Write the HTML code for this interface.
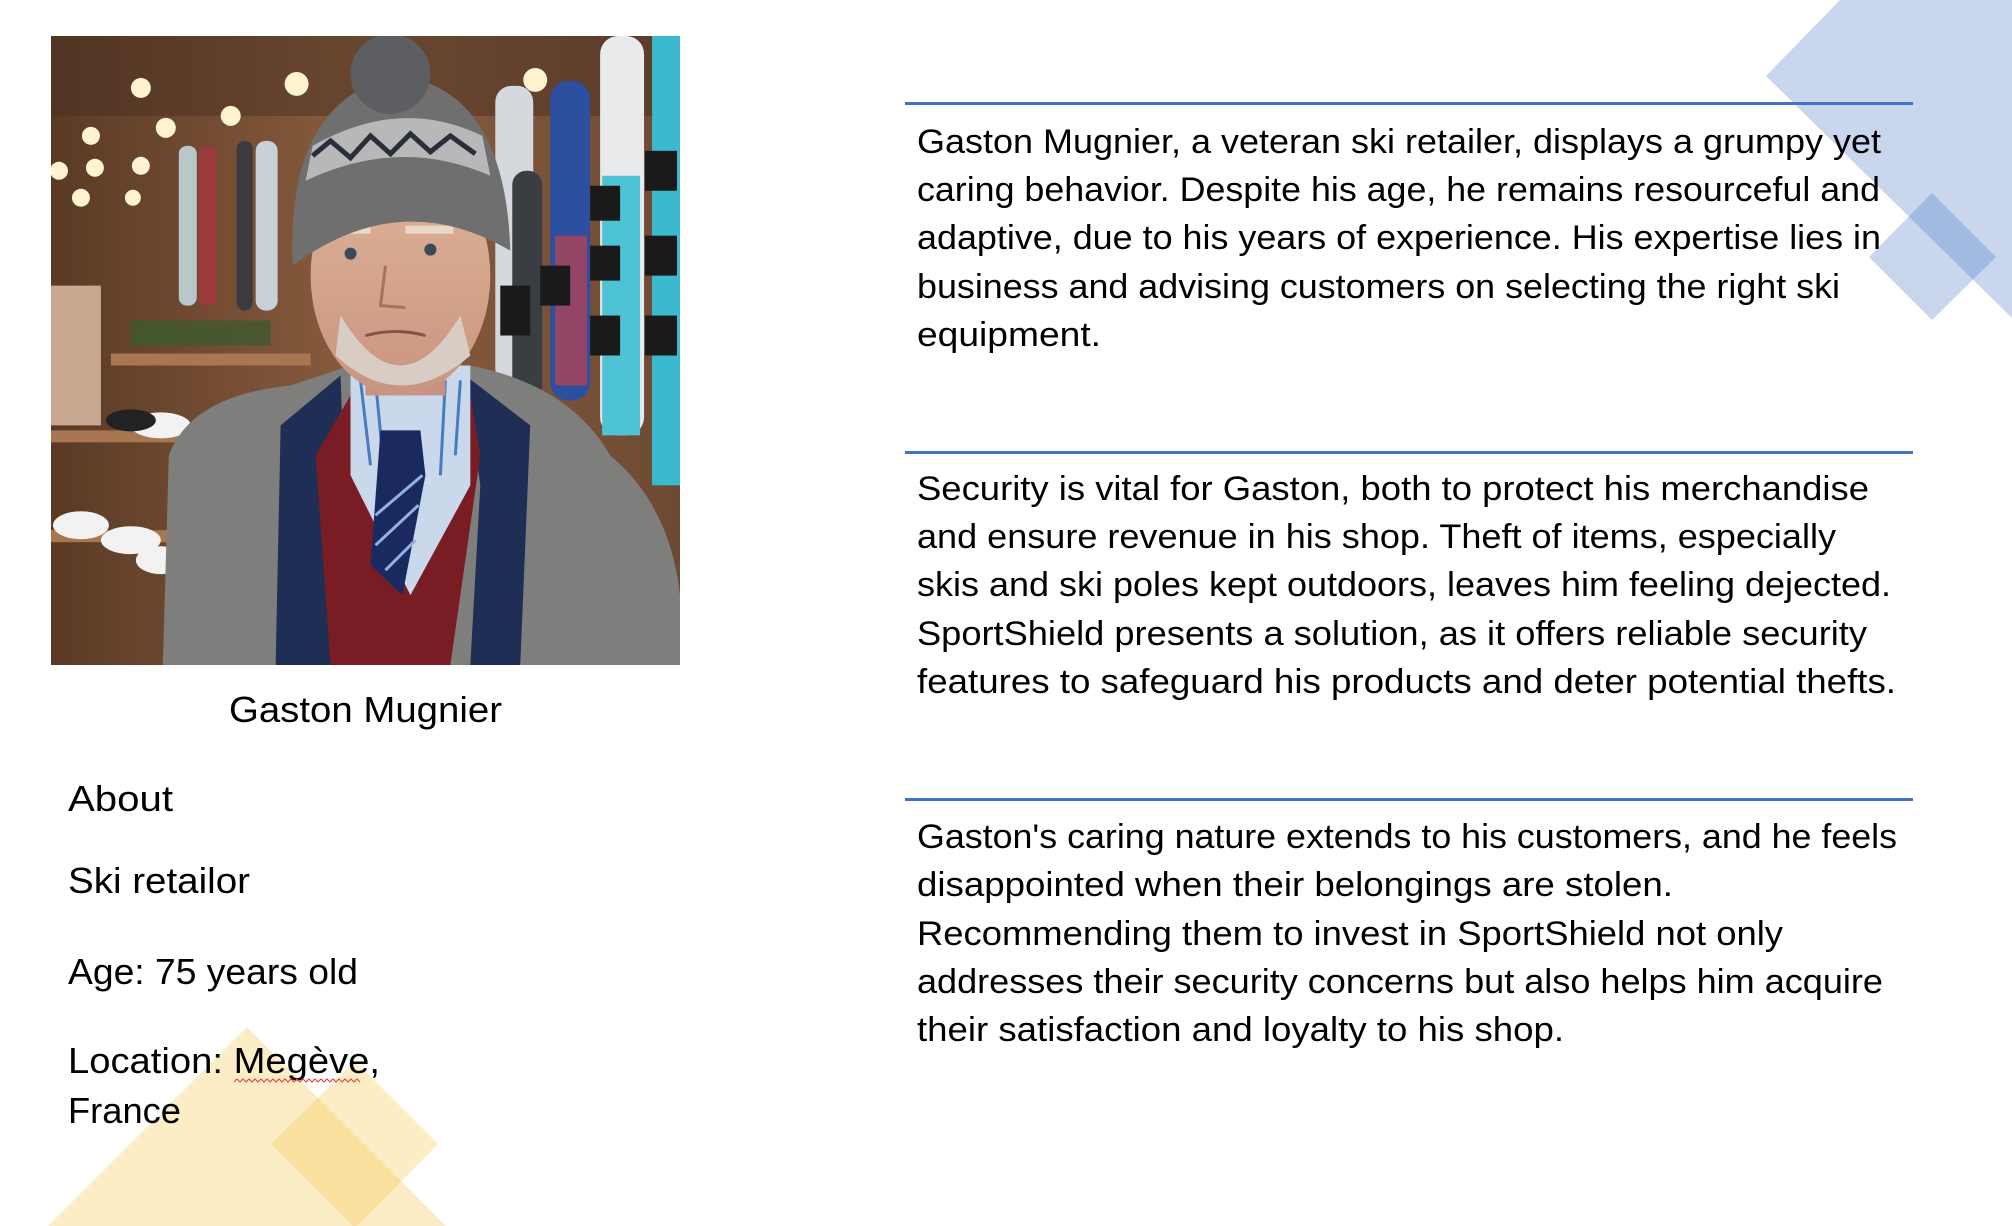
<!DOCTYPE html>
<html><head><meta charset="utf-8"><style>
html,body{margin:0;padding:0;background:#fff;}
body{width:2012px;height:1226px;position:relative;overflow:hidden;font-family:"Liberation Sans",sans-serif;}
svg{position:absolute;left:0;top:0;}
</style></head><body>
<svg width="2012" height="1226" viewBox="0 0 2012 1226">
<!-- decorative shapes -->
<polygon points="1840,0 2012,0 2012,318 1766,76" fill="#4472c4" fill-opacity="0.29"/>
<polygon points="1932,193 1996,257 1932,320 1869,257" fill="#4472c4" fill-opacity="0.29"/>
<polygon points="247,1027 450,1230 44,1230" fill="#f5c342" fill-opacity="0.3"/>
<polygon points="355,1061 438,1144 355,1228 271,1144" fill="#f5c342" fill-opacity="0.3"/>

<!-- photo -->
<g transform="translate(51,36)">
<svg width="629" height="629" viewBox="0 0 630 630">
<defs>
<linearGradient id="wood" x1="0" y1="0" x2="1" y2="0"><stop offset="0" stop-color="#5a3a25"/><stop offset="0.5" stop-color="#8a5d3e"/><stop offset="1" stop-color="#6d4a33"/></linearGradient>
<linearGradient id="face" x1="0" y1="0" x2="0" y2="1"><stop offset="0" stop-color="#e0b49a"/><stop offset="1" stop-color="#c99580"/></linearGradient>
</defs>
<rect width="630" height="630" fill="url(#wood)"/>
<rect x="0" y="0" width="630" height="80" fill="#4a3022" opacity="0.5"/>
<!-- lights -->
<g fill="#fff3d0"><circle cx="90" cy="52" r="10"/><circle cx="40" cy="100" r="9"/><circle cx="115" cy="92" r="10"/><circle cx="8" cy="135" r="9"/><circle cx="44" cy="132" r="9"/><circle cx="90" cy="130" r="9"/><circle cx="30" cy="162" r="9"/><circle cx="82" cy="162" r="8"/><circle cx="180" cy="80" r="10"/><circle cx="246" cy="48" r="12"/><circle cx="485" cy="44" r="12"/></g>
<!-- skis left -->
<rect x="128" y="110" width="18" height="160" fill="#b9c7cc" rx="8"/>
<rect x="148" y="110" width="18" height="160" fill="#9a3a3a" rx="8"/>
<rect x="186" y="105" width="16" height="170" fill="#3a3a40" rx="8"/>
<rect x="205" y="105" width="22" height="170" fill="#c8d0d8" rx="10"/>
<!-- shelves and shoes -->
<rect x="60" y="318" width="200" height="12" fill="#a87650"/>
<rect x="0" y="395" width="160" height="12" fill="#a87650"/>
<rect x="0" y="495" width="140" height="12" fill="#a87650"/>
<g fill="#f2f2f2"><ellipse cx="110" cy="390" rx="30" ry="13"/><ellipse cx="160" cy="405" rx="28" ry="13"/><ellipse cx="30" cy="490" rx="28" ry="14"/><ellipse cx="80" cy="505" rx="30" ry="14"/><ellipse cx="110" cy="525" rx="25" ry="14"/></g>
<ellipse cx="80" cy="385" rx="25" ry="11" fill="#222"/>
<rect x="80" y="285" width="140" height="25" fill="#3d5a30" opacity="0.8"/>
<rect x="0" y="250" width="50" height="140" fill="#c8a890"/>
<!-- skis right -->
<rect x="445" y="50" width="38" height="300" rx="16" fill="#d5d8dc"/>
<rect x="462" y="135" width="30" height="230" rx="14" fill="#3a3d42"/>
<rect x="500" y="45" width="40" height="320" rx="18" fill="#2c4fa0"/>
<rect x="505" y="200" width="32" height="150" fill="#c0404a" opacity="0.7"/>
<rect x="550" y="0" width="44" height="400" rx="18" fill="#e8eaec"/>
<rect x="552" y="140" width="38" height="260" fill="#4ec3d6"/>
<rect x="602" y="0" width="30" height="450" fill="#3ab9cf"/>
<g fill="#1a1a1a"><rect x="540" y="150" width="30" height="35"/><rect x="540" y="210" width="30" height="35"/><rect x="540" y="280" width="30" height="40"/><rect x="595" y="115" width="32" height="40"/><rect x="595" y="200" width="32" height="40"/><rect x="595" y="280" width="32" height="40"/><rect x="450" y="250" width="30" height="50"/><rect x="490" y="230" width="30" height="40"/></g>
<!-- body -->
<path d="M112,630 L118,420 Q140,360 240,350 L300,330 L420,330 Q520,350 560,420 Q620,470 630,560 L630,630 Z" fill="#7e7e7c"/>
<path d="M225,630 L230,390 L290,340 L300,630 Z" fill="#1f2e55"/>
<path d="M420,630 L430,450 L415,340 L480,390 L470,630 Z" fill="#1f2e55"/>
<path d="M265,420 L300,360 L420,360 L430,420 L400,630 L280,630 Z" fill="#7a1c24"/>
<path d="M300,330 L420,330 L420,450 L360,560 L300,440 Z" fill="#c9d8ea"/>
<g stroke="#4a7ac0" stroke-width="3"><line x1="310" y1="345" x2="320" y2="430"/><line x1="325" y1="345" x2="335" y2="450"/><line x1="395" y1="345" x2="390" y2="440"/><line x1="410" y1="345" x2="405" y2="420"/></g>
<path d="M330,395 L370,395 L375,440 L352,560 L320,530 Z" fill="#1a2a60"/>
<g stroke="#8fb3e0" stroke-width="3"><line x1="325" y1="480" x2="372" y2="440"/><line x1="325" y1="510" x2="368" y2="470"/><line x1="335" y1="535" x2="365" y2="505"/></g>
<!-- neck and face -->
<rect x="315" y="300" width="80" height="60" fill="#c89280"/>
<ellipse cx="350" cy="240" rx="90" ry="120" fill="url(#face)"/>
<path d="M290,280 Q350,380 410,280 L420,320 Q350,380 285,320 Z" fill="#d8cdc4"/>
<rect x="275" y="190" width="45" height="8" fill="#e8d8c8"/>
<rect x="355" y="190" width="48" height="8" fill="#e8d8c8"/>
<circle cx="300" cy="218" r="6" fill="#3a4a5a"/><circle cx="380" cy="214" r="6" fill="#3a4a5a"/>
<path d="M335,230 L330,270 L355,272" fill="none" stroke="#a8705e" stroke-width="3"/>
<path d="M315,300 Q345,292 375,300" fill="none" stroke="#8a5048" stroke-width="3"/>
<!-- hat -->
<path d="M242,230 Q235,60 350,40 Q455,55 460,215 Q350,150 242,230 Z" fill="#6f6f70"/>
<path d="M262,110 Q350,60 432,100 L440,140 Q350,100 255,145 Z" fill="#b8b8b8"/>
<path d="M262,120 L280,105 L300,122 L320,100 L340,118 L360,98 L380,116 L400,100 L425,118" fill="none" stroke="#2a2d3a" stroke-width="5"/>
<circle cx="340" cy="38" r="40" fill="#5c5e62"/>
</svg>
</g>

<!-- lines -->
<g fill="#4472c4"><rect x="905" y="102" width="1008" height="3"/><rect x="905" y="451" width="1008" height="3"/><rect x="905" y="798" width="1008" height="3"/></g>

<!-- paragraph text -->
<g font-family="Liberation Sans, sans-serif" font-size="34" fill="#000" lengthAdjust="spacingAndGlyphs">
<text x="917" y="153" textLength="964" lengthAdjust="spacingAndGlyphs">Gaston Mugnier, a veteran ski retailer, displays a grumpy yet</text>
<text x="917" y="201" textLength="963" lengthAdjust="spacingAndGlyphs">caring behavior. Despite his age, he remains resourceful and</text>
<text x="917" y="249" textLength="964" lengthAdjust="spacingAndGlyphs">adaptive, due to his years of experience. His expertise lies in</text>
<text x="917" y="298" textLength="923" lengthAdjust="spacingAndGlyphs">business and advising customers on selecting the right ski</text>
<text x="917" y="346" textLength="184" lengthAdjust="spacingAndGlyphs">equipment.</text>

<text x="917" y="500" textLength="952" lengthAdjust="spacingAndGlyphs">Security is vital for Gaston, both to protect his merchandise</text>
<text x="917" y="548" textLength="919" lengthAdjust="spacingAndGlyphs">and ensure revenue in his shop. Theft of items, especially</text>
<text x="917" y="596" textLength="974" lengthAdjust="spacingAndGlyphs">skis and ski poles kept outdoors, leaves him feeling dejected.</text>
<text x="917" y="645" textLength="950" lengthAdjust="spacingAndGlyphs">SportShield presents a solution, as it offers reliable security</text>
<text x="917" y="693" textLength="979" lengthAdjust="spacingAndGlyphs">features to safeguard his products and deter potential thefts.</text>

<text x="917" y="848" textLength="980" lengthAdjust="spacingAndGlyphs">Gaston's caring nature extends to his customers, and he feels</text>
<text x="917" y="896" textLength="756" lengthAdjust="spacingAndGlyphs">disappointed when their belongings are stolen.</text>
<text x="917" y="945" textLength="866" lengthAdjust="spacingAndGlyphs">Recommending them to invest in SportShield not only</text>
<text x="917" y="993" textLength="966" lengthAdjust="spacingAndGlyphs">addresses their security concerns but also helps him acquire</text>
<text x="917" y="1041" textLength="647" lengthAdjust="spacingAndGlyphs">their satisfaction and loyalty to his shop.</text>
</g>

<!-- left text -->
<g font-family="Liberation Sans, sans-serif" font-size="36" fill="#000">
<text x="229" y="722" textLength="273" lengthAdjust="spacingAndGlyphs">Gaston Mugnier</text>
<text x="68" y="811" textLength="105" lengthAdjust="spacingAndGlyphs">About</text>
<text x="68" y="893" textLength="182" lengthAdjust="spacingAndGlyphs">Ski retailor</text>
<text x="68" y="984" textLength="290" lengthAdjust="spacingAndGlyphs">Age: 75 years old</text>
<text x="68" y="1073" textLength="312" lengthAdjust="spacingAndGlyphs">Location: Megève,</text>
<text x="68" y="1123" textLength="113" lengthAdjust="spacingAndGlyphs">France</text>
</g>
<path d="M234,1082 l3,-3 l3,3 l3,-3 l3,3 l3,-3 l3,3 l3,-3 l3,3 l3,-3 l3,3 l3,-3 l3,3 l3,-3 l3,3 l3,-3 l3,3 l3,-3 l3,3 l3,-3 l3,3 l3,-3 l3,3 l3,-3 l3,3 l3,-3 l3,3 l3,-3 l3,3 l3,-3 l3,3 l3,-3 l3,3 l3,-3 l3,3 l3,-3 l3,3 l3,-3 l3,3 l3,-3 l3,3 l3,-3 l3,3" fill="none" stroke="#e53a3a" stroke-width="1"/>
</svg>
</body></html>
